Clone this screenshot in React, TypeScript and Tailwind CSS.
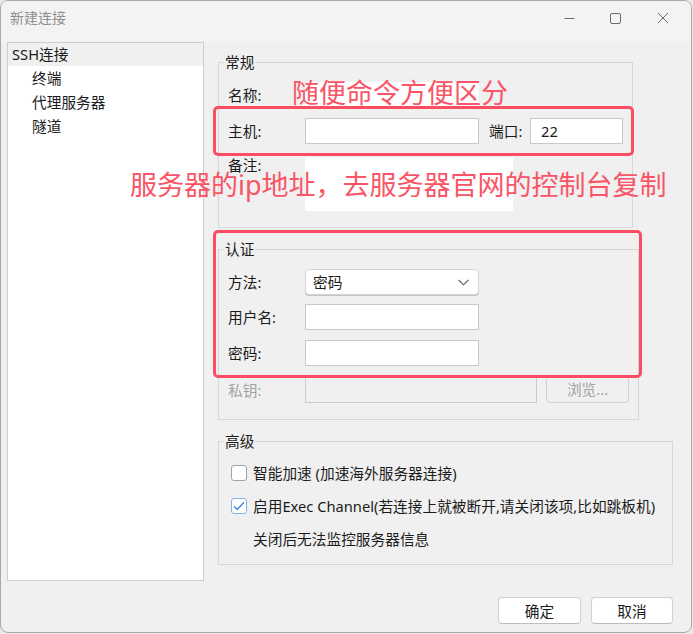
import React from "react";

const FONT = { fontFamily: "'Noto Sans', 'Noto Sans CJK SC', sans-serif" };

function Row({ label, children, disabled }: { label: string; children?: React.ReactNode; disabled?: boolean }) {
  return (
    <div className="flex items-center h-[26px]">
      <div className={`w-[77px] shrink-0 leading-[20px] ${disabled ? "text-[#a3a3a3]" : "text-[#1b1b1b]"}`}>{label}</div>
      {children}
    </div>
  );
}

function Input({ className = "" }: { className?: string }) {
  return <div className={`h-[26px] bg-white border border-[#c8c8c8] ${className}`} />;
}

function Group({ title, className = "", children }: { title: string; className?: string; children: React.ReactNode }) {
  return (
    <fieldset className={`border border-[#d6d6d6] ${className}`}>
      <legend className="ml-[5px] px-[1px] leading-[20px] text-[#1b1b1b]">{title}</legend>
      <div className="px-[9px]">{children}</div>
    </fieldset>
  );
}

export default function App() {
  return (
    <div className="relative w-[693px] h-[634px] bg-[#e9e9e9] text-[14.7px]" style={FONT}>
      <div className="w-[692px] h-[633px] rounded-[8px] border border-[#a9a9a9] bg-[#f0f0f0] flex flex-col overflow-hidden">
        {/* title bar */}
        <div className="h-[41px] flex items-start bg-[#f3f3f3]">
          <div className="pl-[9px] pt-[7px] leading-[20px] text-[14px] text-[#8e8e8e]">新建连接</div>
          <div className="ml-auto flex items-center h-[34px] text-[#666]">
            <div className="w-[46px] flex justify-center">
              <svg width="11" height="11" viewBox="0 0 11 11"><path d="M0.5 5.5h10" stroke="#6a6a6a" strokeWidth="1" /></svg>
            </div>
            <div className="w-[46px] flex justify-center">
              <svg width="11" height="11" viewBox="0 0 11 11"><rect x="0.5" y="0.5" width="10" height="10" rx="1.5" fill="none" stroke="#6a6a6a" strokeWidth="1" /></svg>
            </div>
            <div className="w-[50px] flex justify-center mr-[3px]">
              <svg width="12" height="12" viewBox="0 0 12 12"><path d="M1 1l10 10M11 1L1 11" stroke="#6a6a6a" strokeWidth="1" /></svg>
            </div>
          </div>
        </div>

        {/* body */}
        <div className="flex h-[539px]">
          {/* tree */}
          <div className="ml-[6px] w-[197px] h-[539px] bg-white border border-[#cdcdcd] text-[#1b1b1b]">
            <div className="h-[23px] bg-[#f0f0f0] pl-[4px] leading-[23px]">SSH连接</div>
            <div className="h-[24px] pl-[24px] leading-[24px]">终端</div>
            <div className="h-[24px] pl-[24px] leading-[24px]">代理服务器</div>
            <div className="h-[24px] pl-[24px] leading-[24px]">隧道</div>
          </div>

          {/* right column */}
          <div className="ml-[14px] flex flex-col">
            <Group title="常规" className="mt-[10px] w-[413px] pb-[16px]">
              <div className="pt-[10px]">
                <Row label="名称:">
                  <div className="h-[26px] w-[174px] bg-white" />
                </Row>
              </div>
              <div className="mt-[10px]">
                <Row label="主机:">
                  <Input className="w-[174px]" />
                  <div className="ml-[10px] w-[41px] leading-[20px] text-[#1b1b1b]">端口:</div>
                  <div className="h-[26px] w-[93px] bg-white border border-[#c8c8c8] flex items-center pl-[10px] text-[#1b1b1b]">22</div>
                </Row>
              </div>
              <div className="mt-[13px] flex items-start h-[54px]">
                <div className="w-[77px] shrink-0 leading-[20px] text-[#1b1b1b] -mt-[2px]">备注:</div>
                <div className="h-[54px] w-[208px] bg-white" />
              </div>
            </Group>

            <Group title="认证" className="mt-[11px] w-[420px] pb-[16px]">
              <div className="pt-[10px]">
                <Row label="方法:">
                  <div className="h-[26px] w-[174px] bg-white border border-[#d4d4d4] rounded-[4px] shadow-[0_1px_0_#c4c4c4] flex items-center pl-[7px] pr-[9px] text-[#1b1b1b]">
                    <span className="leading-[20px]">密码</span>
                    <svg className="ml-auto" width="11" height="7" viewBox="0 0 11 7"><path d="M0.5 0.8L5.5 5.8L10.5 0.8" fill="none" stroke="#555" strokeWidth="1.1" /></svg>
                  </div>
                </Row>
              </div>
              <div className="mt-[9px]">
                <Row label="用户名:">
                  <Input className="w-[174px]" />
                </Row>
              </div>
              <div className="mt-[10px]">
                <Row label="密码:">
                  <Input className="w-[174px]" />
                </Row>
              </div>
              <div className="mt-[11px]">
                <Row label="私钥:" disabled>
                  <div className="h-[26px] w-[232px] bg-[#f0f0f0] border border-[#cccccc]" />
                  <div className="ml-[9px] h-[27px] w-[83px] -mt-[2px] border border-[#d2d2d2] rounded-[4px] flex items-center justify-center text-[#a3a3a3] leading-[20px]">浏览...</div>
                </Row>
              </div>
            </Group>

            <Group title="高级" className="mt-[11px] w-[455px] pb-[15px]">
              <div className="pt-[12px] flex items-center h-[20px] box-content">
                <div className="ml-[3px] w-[16px] h-[16px] rounded-[3px] border border-[#a2a2a2] bg-white" />
                <span className="ml-[6px] leading-[20px] text-[#1b1b1b]">智能加速 (加速海外服务器连接)</span>
              </div>
              <div className="mt-[13px] flex items-center h-[20px]">
                <div className="ml-[3px] w-[16px] h-[16px] rounded-[3px] border border-[#86b3e6] bg-white flex items-center justify-center">
                  <svg width="12" height="10" viewBox="0 0 12 10"><path d="M1 5.2L4.3 8.5L11 1.3" fill="none" stroke="#3e86dc" strokeWidth="1.4" /></svg>
                </div>
                <span className="ml-[6px] leading-[20px] text-[#1b1b1b] whitespace-nowrap">启用Exec Channel(若连接上就被断开,请关闭该项,比如跳板机)</span>
              </div>
              <div className="mt-[13px] h-[20px] pl-[25px] leading-[20px] text-[#1b1b1b]">关闭后无法监控服务器信息</div>
            </Group>
          </div>
        </div>

        {/* footer */}
        <div className="flex justify-end pr-[18px] pt-[16px] gap-[10px]">
          <div className="w-[83px] h-[27px] bg-white border border-[#d0d0d0] border-b-[#bdbdbd] rounded-[4px] flex items-center justify-center text-[#1b1b1b] leading-[20px]">确定</div>
          <div className="w-[82px] h-[27px] bg-white border border-[#d0d0d0] border-b-[#bdbdbd] rounded-[4px] flex items-center justify-center text-[#1b1b1b] leading-[20px]">取消</div>
        </div>
      </div>

      {/* annotations overlay */}
      <div className="absolute left-[213px] top-[106px] w-[421px] h-[50px] border-[3px] border-[#fb4d62] rounded-[5px]" />
      <div className="absolute left-[213px] top-[230px] w-[429px] h-[148px] border-[3px] border-[#fb4d62] rounded-[5px]" />
      <div className="absolute left-[292px] top-[75px] text-[27px] leading-[36px] text-[#f95566] whitespace-nowrap">随便命令方便区分</div>
      <div className="absolute left-[130px] top-[167px] text-[27px] leading-[36px] text-[#f95566] whitespace-nowrap">服务器的ip地址，去服务器官网的控制台复制</div>
    </div>
  );
}
